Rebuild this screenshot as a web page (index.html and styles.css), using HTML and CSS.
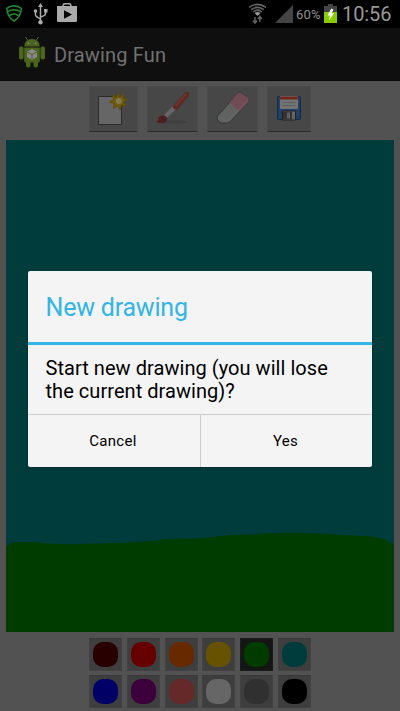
FILE: index.html
```html
<!DOCTYPE html>
<html lang="en">
<head>
<meta charset="utf-8">
<title>Drawing Fun</title>
<link rel="stylesheet" href="styles.css">
</head>
<body>
<div class="screen">
  <header class="status">
    <svg class="status-left" width="84" height="28" viewBox="0 0 84 28">
      <g fill="none" stroke="#218b32" stroke-width="1.5" stroke-linejoin="round">
        <path d="M14 5.8Q10 6 6.8 8.3C7 13.500 9.500 18.500 14 21C18.500 18.500 21 13.500 21.400 8.300Q18 6 14 5.800Z"/>
        <path d="M7.300 12Q14 7.500 20.700 12M9 15.800Q14 12 19 15.800"/>
      </g>
      <g fill="none" stroke="#aaa" stroke-width="1.500">
        <path d="M40.500 6V22M35.500 12V15Q35.500 16.500 40.500 19M45.500 12V14Q45.500 15.500 40.500 17"/>
      </g>
      <g fill="#aaa"><path d="M38 7L40.500 3L43 7Z"/><circle cx="40.500" cy="22.300" r="2.200"/><circle cx="35.500" cy="11" r="1.800"/><path d="M44 9h3.500v3.500H44z"/></g>
      <path d="M63 7V6Q63 3.800 65 3.800H69Q71 3.800 71 6V7" fill="none" stroke="#aaa" stroke-width="1.400"/>
      <path d="M57 6H77V20.500Q77 22 75.500 22H58.500Q57 22 57 20.500Z" fill="#aaa"/><path d="M64 10.300V18.800L72 14.500Z" fill="#000"/>
    </svg>
    <div class="status-right">
      <svg width="50" height="28" viewBox="0 0 50 28">
        <g fill="none" stroke="#666" stroke-width="1.600"><path d="M4 7.300Q12.500 1.500 21 7.300M6.200 9.700Q12.500 5 18.800 9.700M8.200 12Q12.500 8.300 16.800 12"/></g>
        <path d="M9.500 13Q12.500 11 15.500 13L12.500 16Z" fill="#999"/>
        <path d="M10 17V22.500M8 20.500L10 23L12 20.500M14.800 22V17M12.800 19L14.800 16.500L16.800 19" fill="none" stroke="#606060" stroke-width="1.500"/>
        <path d="M30 23H48V5Z" fill="#444"/>
      </svg>
      <span class="percent">60%</span>
      <svg class="battery" width="13" height="28" viewBox="0 0 13 28">
        <path d="M4 4H9V6H13V12H0V6H4Z" fill="#444"/><path d="M0 12H13V23H0Z" fill="#8c0"/>
        <path d="M7.300 8.500L3.500 15.500H6L5 20.500L10 13.300H7.300L9.500 9.800Z" fill="#fff"/>
      </svg>
      <span class="clock">10:56</span>
    </div>
  </header>
  <div class="appbar">
    <svg width="28" height="34" viewBox="0 0 28 34">
      <g fill="#4b651c"><path d="M6.200 10.500Q6.500 3 14 3Q21.500 3 21.800 10.500Z"/><path d="M6.200 11.500H21.800V25Q21.800 26.500 20 26.500H8Q6.200 26.500 6.200 25Z"/><rect x="1" y="10.500" width="4.600" height="13" rx="2"/><rect x="22.400" y="10.500" width="4.600" height="13" rx="2"/><rect x="8" y="24" width="4.500" height="7.500" rx="2"/><rect x="15.500" y="24" width="4.500" height="7.500" rx="2"/></g>
      <path d="M9.500 4L7.500 1M18.500 4L20.500 1" stroke="#4b651c" stroke-width="1"/>
      <circle cx="10.500" cy="7.300" r=".8" fill="#888"/><circle cx="17.500" cy="7.300" r=".8" fill="#888"/>
      <path d="M14 13L19 15.500V21L14 24L9 21V15.500Z" fill="#888"/><path d="M9 16L14 18.500L19 16M14 18.500V24" fill="none" stroke="#4b651c" stroke-width="1"/>
    </svg>
    <span class="app-title">Drawing Fun</span>
  </div>
  <main class="content">
    <div class="tools">
      <div class="tool"><svg width="49" height="46" viewBox="0 0 49 46">
        <path d="M9.500 10.500H32.500V38.500H9.500Z" fill="#666" stroke="#2b2b2b"/>
        <path d="M29.500 6L31 11L35 7.500L34.200 12.500L39 13.500L34.500 16L37.500 20L32.500 19L31 24L28.500 19.500L24.500 22.500L25 17.500L20.500 16L25 13.500L22.500 9L27.500 11Z" fill="#715a0c" stroke="#5c4805" stroke-width=".8"/><circle cx="29.800" cy="15" r="3" fill="#817a50"/>
      </svg></div>
      <div class="tool tool-wide"><svg width="51" height="46" viewBox="0 0 51 46">
        <ellipse cx="26" cy="36" rx="14" ry="1.800" fill="#404040"/>
        <path d="M17 29L26 20L29 23L20 32Z" fill="#666"/><path d="M25.500 20.500L38 6.500Q41 5 42 6.500V10L30 24Q27 24 25.500 20.500Z" fill="#602a24"/><path d="M28.500 20L39 8" stroke="#6e352e" stroke-width="1.500"/>
        <path d="M9 36Q12 35 11.500 31.500Q15 28 19 30.500Q22 34 18 36.500Q14 38 9 36Z" fill="#4d201e"/>
      </svg></div>
      <div class="tool tool-wide"><svg width="51" height="46" viewBox="0 0 51 46">
        <path d="M10.500 30L30 8Q32 6 34 7L40.500 11.500Q42.500 14 40.500 17L23 36Q20 38 14 37Q9 34 10.500 30Z" fill="#5f6260" stroke="#353535" stroke-width="1"/>
        <path d="M22.500 16.500L30 8Q32 6 34 7L40.500 11.500Q42.500 14 40.500 17L33 25.300Z" fill="#704b56"/><path d="M11 31L20 35L31.500 23.500" fill="none" stroke="#696b69"/><path d="M31.500 23.500L41 13.500" stroke="#7c5a64"/>
      </svg></div>
      <div class="tool tool-small"><svg width="44" height="46" viewBox="0 0 44 46">
        <rect x="10.500" y="10.500" width="23" height="23" rx="1" fill="#233f66" stroke="#142744"/>
        <path d="M13 10H31V22Q31 23 30 23H14Q13 23 13 22Z" fill="#747474"/><path d="M13 10.500H31V13.500H13Z" fill="#71291e"/><path d="M15.500 16.500H28.500M15.500 19.500H28.500" stroke="#5d5d5d"/>
        <path d="M15.500 25H28.500V34H15.500Z" fill="#656565" stroke="#222"/><path d="M16 25.500H25V33.500H16Z" fill="#333"/><path d="M20 26.500H23V32.500H20Z" fill="#606060"/>
      </svg></div>
    </div>
    <div class="canvas"><svg width="388" height="492" viewBox="0 0 388 492">
      <path d="M0 407Q4 402 11 402H31Q46 405 79 403.800L120 402.800Q145 401 163 399L188 398.500L207 397L222 395L247 394.500Q263 392 298 393L358 396Q370 397 378 399L388 405V492H0Z" fill="#003c00"/>
    </svg></div>
    <div class="palette">
      <i class="chip"><b class="maroon"></b></i><i class="chip"><b class="red"></b></i><i class="chip"><b class="orange"></b></i><i class="chip"><b class="yellow"></b></i><i class="chip selected"><b class="green"></b></i><i class="chip"><b class="teal"></b></i>
      <i class="chip"><b class="blue"></b></i><i class="chip"><b class="purple"></b></i><i class="chip"><b class="pink"></b></i><i class="chip"><b class="white"></b></i><i class="chip"><b class="gray"></b></i><i class="chip"><b class="black"></b></i>
    </div>
  </main>
  <section class="dialog" role="dialog">
    <h1>New drawing</h1>
    <p>Start new drawing (you will lose<br>the current drawing)?</p>
    <div class="actions"><button>Cancel</button><button>Yes</button></div>
  </section>
</div>
</body>
</html>
```
FILE: styles.css
```css
* { box-sizing: border-box; }
body { margin: 0; font-family: Roboto, "Liberation Sans", sans-serif; }
svg { display: block; flex: none; }
.screen { position: relative; width: 400px; height: 711px; overflow: hidden; background: #525252; }
.status { height: 28px; background: #000; display: flex; justify-content: space-between; }
.status-right { display: flex; align-items: center; width: 155px; color: #999; }
.percent { width: 26px; margin-left: 1px; font-size: 13px; letter-spacing: 0.2px; color: #929292; white-space: nowrap; }
.battery { margin-left: 2px; }
.clock { margin-left: 5px; font-size: 20px; letter-spacing: -0.1px; line-height: 28px; white-space: nowrap; }
.appbar { height: 53px; padding: 8px 18px; display: flex; align-items: flex-start; background: #0f0f0f; border-bottom: 1px solid #090909; }
.app-title { margin-left: 8px; font-size: 20px; letter-spacing: 0.15px; line-height: 38px; color: #717171; white-space: nowrap; }
.content { padding: 5px 6px 0; }
.tools { display: flex; gap: 9px; justify-content: center; height: 54px; }
.tool { width: 49px; height: 46px; background: #474747; border: 1px solid #4b4b4b; border-bottom-color: #2c2c2c; }
.tool svg { margin: -1px; }
.tool-wide { width: 51px; }
.tool-small { width: 44px; }
.canvas { height: 492px; background: #003c3c; }
.palette { margin: 6px auto 0; width: 222px; display: grid; grid-template-columns: repeat(6, 33px); justify-content: space-between; row-gap: 4px; }
.chip { height: 33px; padding: 3px; background: #3e3e3e; border: 1px solid #424242; border-top-color: #393939; }
.chip b { display: block; width: 25px; height: 25px; border-radius: 10px; }
.selected { background: #151515; border-color: #1b1b1b; }
.maroon { background: #290000; } .red { background: #660000; } .orange { background: #662900; }
.yellow { background: #665200; } .green { background: #003c00; } .teal { background: #003c3c; }
.blue { background: #000066; } .purple { background: #3c003c; } .pink { background: #662929; }
.white { background: #666; } .gray { background: #303030; } .black { background: #000; }
.dialog { position: absolute; left: 28px; top: 271px; width: 344px; height: 196px; display: flex; flex-direction: column; background: #f4f4f4; border-radius: 2px; color: #000; box-shadow: 0 1px 3px rgba(0,0,0,.3); overflow: hidden; }
h1 { margin: 0; height: 74px; padding: 0 17.5px; font-size: 25px; letter-spacing: -0.2px; line-height: 73px; font-weight: 400; color: #33b5e5; border-bottom: 3px solid #33b5e5; }
.dialog p { margin: 0; height: 69px; padding: 12px 17.5px 0; font-size: 20px; letter-spacing: 0.05px; line-height: 23px; white-space: nowrap; }
.actions { flex: 1; display: grid; grid-template-columns: 173px 1fr; border-top: 1px solid #ccc; }
button { border: 0; padding: 0 2px 0 0; background: transparent; color: #000; font: 15px Roboto, sans-serif; letter-spacing: 0.3px; }
button:first-child { border-right: 1px solid #ccc; }
```
